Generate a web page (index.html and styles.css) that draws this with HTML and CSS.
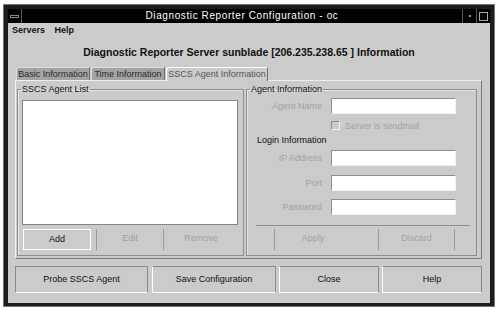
FILE: index.html
```html
<!DOCTYPE html>
<html lang="en">

<head>
    <meta charset="utf-8">
    <title>Diagnostic Reporter Configuration</title>
    <link rel="stylesheet" href="styles.css">
</head>

<body>
    <div class="window">
        <div class="frame">
            <div class="titlebar">
                <div class="tb-menu"><span class="tb-bar"></span></div>
                <div class="tb-title">Diagnostic Reporter Configuration - oc</div>
                <div class="tb-btn"><span class="tb-dot"></span></div>
                <div class="tb-btn"><span class="tb-square"></span></div>
            </div>

            <div class="client">
                <nav class="menubar">
                    <span>Servers</span>
                    <span>Help</span>
                </nav>

                <h1 class="heading">Diagnostic Reporter Server sunblade [206.235.238.65 ] Information</h1>

                <div class="content">
                    <div class="tabs">
                        <div class="tab tab-basic">Basic Information</div>
                        <div class="tab tab-time">Time Information</div>
                        <div class="tab tab-sscs active">SSCS Agent Information</div>
                    </div>

                    <section class="panel">
                        <fieldset class="group">
                            <legend>SSCS Agent List</legend>
                            <div class="listbox"></div>
                            <div class="list-buttons">
                                <div class="btn btn-add">Add</div>
                                <div class="btn btn-edit off">Edit</div>
                                <div class="btn btn-remove off">Remove</div>
                            </div>
                        </fieldset>

                        <fieldset class="group">
                            <legend>Agent Information</legend>
                            <div class="field field-name">
                                <label>Agent Name</label>
                                <div class="input"></div>
                            </div>
                            <div class="check-row">
                                <span class="checkbox"></span>
                                <span>Server is sendmail</span>
                            </div>
                            <div class="subhead">Login Information</div>
                            <div class="field field-ip">
                                <label>IP Address</label>
                                <div class="input"></div>
                            </div>
                            <div class="field field-port">
                                <label>Port</label>
                                <div class="input"></div>
                            </div>
                            <div class="field field-pass">
                                <label>Password</label>
                                <div class="input"></div>
                            </div>
                            <div class="separator"></div>
                            <div class="agent-buttons">
                                <div class="btn btn-apply off">Apply</div>
                                <div class="btn btn-discard off">Discard</div>
                            </div>
                        </fieldset>
                    </section>

                    <div class="actions">
                        <div class="action action-probe">Probe SSCS Agent</div>
                        <div class="action action-save">Save Configuration</div>
                        <div class="action action-close">Close</div>
                        <div class="action action-help">Help</div>
                    </div>
                </div>
            </div>
        </div>
    </div>
</body>

</html>
```

FILE: styles.css
```css
body {
    margin: 0;
    background-color: white;
    font-family: "Liberation Sans", Arial, sans-serif;
    font-size: 9px;
    color: #111;
}

.window {
    margin: 4px 0 0 3px;
    width: 492px;
    box-sizing: border-box;
    border: 1px solid #777;
}

.frame {
    border: solid #1c1c1c;
    border-width: 4px 4px 3px 4px;
}

/* title bar */
.titlebar {
    display: flex;
    height: 14px;
    background-color: black;
    color: white;
}

.tb-menu,
.tb-btn {
    width: 13px;
    display: flex;
    align-items: center;
    justify-content: center;
}

.tb-menu {
    border-right: 1px solid #5a5a5a;
}

.tb-btn {
    border-left: 1px solid #5a5a5a;
}

.tb-bar {
    width: 7px;
    height: 1px;
    border: 1px solid #8a8a8a;
}

.tb-dot {
    width: 2px;
    height: 2px;
    background-color: #9a9a9a;
}

.tb-square {
    width: 7px;
    height: 7px;
    border: 1px solid #a8a8a8;
}

.tb-title {
    flex: 1;
    text-align: center;
    font-size: 10px;
    line-height: 14px;
    letter-spacing: 0.6px;
}

/* client area */
.client {
    height: 280px;
    background-color: #cbcbcb;
}

.menubar {
    height: 15px;
    line-height: 15px;
    padding-left: 4px;
    font-weight: bold;
}

.menubar span {
    margin-right: 7px;
}

.heading {
    margin: 8px 0 0;
    font-size: 10.5px;
    line-height: 12px;
    text-align: center;
}

.content {
    padding: 0 8px 0 7px;
}

/* tabs */
.tabs {
    display: flex;
    margin-top: 9px;
    padding-left: 1px;
    height: 13px;
    gap: 1px;
}

.tab {
    box-sizing: border-box;
    height: 13px;
    line-height: 12px;
    text-align: center;
    background-color: #a3a3a3;
    color: #2a2a2a;
    border-top: 1px solid #dcdcdc;
    border-left: 1px solid #dcdcdc;
    border-right: 1px solid #6e6e6e;
    border-top-left-radius: 3px;
    white-space: nowrap;
    overflow: hidden;
}

.tab-basic {
    width: 74px;
}

.tab-time {
    width: 74px;
}

.tab-sscs {
    width: 102px;
}

.tab.active {
    position: relative;
    z-index: 1;
    height: 14px;
    background-color: #cbcbcb;
    border-top-color: white;
    border-left-color: white;
    color: #555;
}

.panel {
    display: grid;
    grid-template-columns: 227px 231px;
    gap: 2px;
    height: 179px;
    box-sizing: border-box;
    padding: 2px 4px 2px 1px;
    border-top: 1px solid #efefef;
    border-left: 1px solid #efefef;
    border-right: 1px solid #7a7a7a;
    border-bottom: 1px solid #7a7a7a;
}

.group {
    margin: 0;
    padding: 0;
    min-width: 0;
    border: 1px solid #8e8e8e;
    box-shadow: inset 1px 1px 0 #e6e6e6;
}

.group legend {
    margin-left: 3px;
    padding: 0 1px;
    line-height: 12px;
}

.listbox {
    margin: 5px 5px 0 4px;
    height: 125px;
    box-sizing: border-box;
    background-color: white;
    border: 1px solid #858585;
}

.list-buttons {
    display: flex;
    margin: 4px 5px 0 5px;
    height: 21px;
}

.btn {
    box-sizing: border-box;
    height: 21px;
    line-height: 19px;
    text-align: center;
}

.btn.off {
    color: #a2a2a2;
    border-left: 1px solid #9a9a9a;
}

.btn-add {
    width: 68px;
    margin-right: 5px;
    border: 1px solid white;
}

.btn-edit {
    width: 67px;
}

.btn-remove {
    flex: 1;
}

/* agent form */
.field {
    display: grid;
    grid-template-columns: 75px 125px;
    column-gap: 9px;
    align-items: center;
}

.field label {
    text-align: right;
    color: #a2a2a2;
}

.input {
    height: 16px;
    box-sizing: border-box;
    background-color: white;
    border-top: 1px solid #8e8e8e;
    border-left: 1px solid #8e8e8e;
    border-bottom: 1px solid #f2f2f2;
    border-right: 1px solid #f2f2f2;
}

.field-name {
    margin-top: 3px;
}

.check-row {
    display: flex;
    align-items: center;
    gap: 5px;
    margin-top: 7px;
    padding-left: 84px;
    height: 9px;
    color: #a2a2a2;
}

.checkbox {
    width: 9px;
    height: 9px;
    box-sizing: border-box;
    border-top: 1px solid #8e8e8e;
    border-left: 1px solid #8e8e8e;
    border-bottom: 1px solid #f2f2f2;
    border-right: 1px solid #f2f2f2;
}

.subhead {
    margin-top: 4px;
    padding-left: 10px;
    line-height: 12px;
}

.field-ip {
    margin-top: 4px;
}

.field-port {
    margin-top: 9px;
}

.field-pass {
    margin-top: 8px;
}

.separator {
    margin: 10px 6px 0 9px;
    height: 1px;
    background-color: #8e8e8e;
}

.agent-buttons {
    display: flex;
    margin: 3px 0 0 27px;
}

.btn-apply {
    width: 77px;
    margin-right: 27px;
}

.btn-discard {
    width: 77px;
    border-right: 1px solid #9a9a9a;
}

/* bottom buttons */
.actions {
    display: flex;
    margin-top: 7px;
}

.action {
    box-sizing: border-box;
    height: 27px;
    line-height: 25px;
    text-align: center;
    border-top: 1px solid #8a8a8a;
    border-left: 1px solid white;
    border-right: 1px solid #8a8a8a;
    border-bottom: 1px solid white;
}

.action-probe {
    width: 133px;
    margin-right: 4px;
    border-left-color: #8a8a8a;
}

.action-save {
    width: 124px;
    margin-right: 3px;
}

.action-close {
    width: 100px;
    margin-right: 3px;
}

.action-help {
    width: 100px;
}
```
